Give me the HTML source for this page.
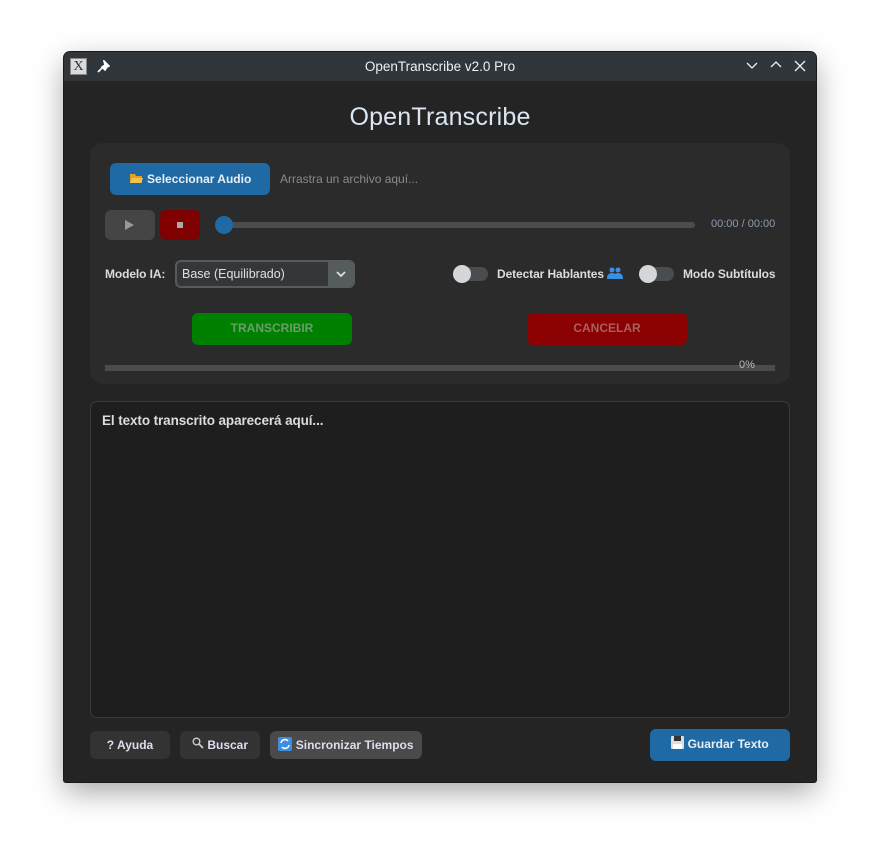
<!DOCTYPE html>
<html><head><meta charset="utf-8">
<style>
*{box-sizing:border-box;margin:0;padding:0}
body{width:880px;height:858px;background:#fff;position:relative;overflow:hidden;font-family:"Liberation Sans",sans-serif;}
.a{position:absolute}
#win{left:64px;top:52px;width:752px;height:730px;background:#242424;border-radius:6px 6px 2px 2px;box-shadow:0 0 0 1px #1a1a1a,0 10px 30px rgba(0,0,0,.35);overflow:hidden}
#tb{left:0;top:0;width:752px;height:29px;background:#31363b;color:#eef0f2;font-size:13.5px;text-align:center;line-height:29px}
.btn{position:absolute;border-radius:6px;text-align:center;color:#dde;font-weight:bold;font-size:12px}
.lbl{position:absolute;color:#dcdcdc;font-weight:bold;font-size:12px;letter-spacing:-0.1px}
.sw{position:absolute;width:34px;height:14px;border-radius:7px;background:#4a4d50}
.sw i{position:absolute;left:-1px;top:-2px;width:18px;height:18px;border-radius:50%;background:#d4d6da}
</style></head><body>
<div id="win" class="a">
 <div id="tb" class="a">OpenTranscribe v2.0 Pro
  <div class="a" style="left:6px;top:6px;width:17px;height:17px;background:#d9dadb;border:1px solid #888;color:#333;font-size:14px;line-height:16px;font-family:'Liberation Serif',serif">X</div>
  <svg class="a" style="left:32px;top:8px" width="14" height="14" viewBox="0 0 14 14"><path d="M8 1l5 5-2 1-2 3-3-3 3-2zM6 8l-4 4" stroke="#fff" stroke-width="1.6" fill="#fff"/></svg>
  <svg class="a" style="left:682px;top:9px" width="12" height="10"><path d="M1 2l5 5 5-5" stroke="#eee" fill="none" stroke-width="1.3"/></svg>
  <svg class="a" style="left:706px;top:8px" width="12" height="10"><path d="M1 7l5-5 5 5" stroke="#eee" fill="none" stroke-width="1.3"/></svg>
  <svg class="a" style="left:730px;top:8px" width="12" height="12"><path d="M1 1l10 10M11 1L1 11" stroke="#eee" fill="none" stroke-width="1.3"/></svg>
 </div>
 <div class="a" style="left:0;top:51px;width:752px;text-align:center;color:#dbe6f2;font-size:25px;letter-spacing:.2px">OpenTranscribe</div>
 <div class="a" style="left:26px;top:91px;width:700px;height:241px;background:#2b2b2b;border-radius:13px"></div>
 <div class="btn" style="left:46px;top:111px;width:160px;height:32px;background:#1f6aa5;line-height:32px;color:#e8eef4"><svg width="15" height="12" style="vertical-align:-1px"><path d="M1 2h5l1 2h6v7H1z" fill="#e0a020"/><path d="M3 6h11l-2 5H1z" fill="#f6c04a"/></svg> Seleccionar Audio</div>
 <div class="a" style="left:216px;top:120px;color:#8a8a8a;font-size:12px">Arrastra un archivo aquí...</div>
 <div class="btn" style="left:41px;top:158px;width:50px;height:30px;background:#454545"><svg class="a" style="left:19px;top:10px" width="10" height="10"><path d="M1 0l9 5-9 5z" fill="#999"/></svg></div>
 <div class="btn" style="left:96px;top:158px;width:40px;height:30px;background:#7f0000"><div class="a" style="left:17px;top:12px;width:6px;height:6px;background:#aaa"></div></div>
 <div class="a" style="left:155px;top:170px;width:476px;height:6px;background:#4a4d50;border-radius:3px"></div>
 <div class="a" style="left:151px;top:164px;width:18px;height:18px;border-radius:50%;background:#1f6aa5"></div>
 <div class="a" style="left:647px;top:166px;color:#8c9bb0;font-size:11px">00:00 / 00:00</div>
 <div class="lbl" style="left:41px;top:215px">Modelo IA:</div>
 <div class="a" style="left:111px;top:208px;width:180px;height:28px;border:2px solid #565b5e;border-radius:6px;background:#343638;overflow:hidden">
  <div class="a" style="left:5px;top:5px;color:#e0e0e0;font-size:12.5px">Base (Equilibrado)</div>
  <div class="a" style="left:151px;top:0;width:27px;height:24px;background:#565b5e"></div>
  <svg class="a" style="left:159px;top:9px" width="10" height="7"><path d="M1 1l4 4 4-4" stroke="#e0e0e0" stroke-width="1.8" fill="none"/></svg>
 </div>
 <div class="sw" style="left:390px;top:215px"><i></i></div>
 <div class="lbl" style="left:433px;top:215px">Detectar Hablantes <svg width="16" height="12" style="vertical-align:-1px"><circle cx="5" cy="3" r="2.5" fill="#3a8ee6"/><circle cx="11" cy="3" r="2.5" fill="#3a8ee6"/><path d="M0 12q0-6 5-6t5 6zM6 12q0-6 5-6t5 6z" fill="#3a8ee6"/></svg></div>
 <div class="sw" style="left:576px;top:215px"><i></i></div>
 <div class="lbl" style="left:619px;top:215px">Modo Subtítulos</div>
 <div class="btn" style="left:128px;top:261px;width:160px;height:32px;background:#008000;line-height:30px;color:#6a9d6a">TRANSCRIBIR</div>
 <div class="btn" style="left:463px;top:261px;width:160px;height:32px;background:#8b0000;line-height:30px;color:#a86060">CANCELAR</div>
 <div class="a" style="left:41px;top:313px;width:670px;height:6px;background:#4a4d50"></div>
 <div class="a" style="left:675px;top:307px;color:#bbb;font-size:11px">0%</div>
 <div class="a" style="left:26px;top:349px;width:700px;height:317px;background:#1e1e1e;border:1px solid #3a3a3a;border-radius:7px"></div>
 <div class="a" style="left:38px;top:361px;color:#dcdcdc;font-size:13.5px;font-weight:bold;letter-spacing:-0.1px">El texto transcrito aparecerá aquí...</div>
 <div class="btn" style="left:26px;top:679px;width:80px;height:28px;background:#333;line-height:28px">? Ayuda</div>
 <div class="btn" style="left:116px;top:679px;width:80px;height:28px;background:#333;line-height:28px"><svg width="12" height="12" style="vertical-align:0"><circle cx="4.5" cy="4.5" r="3.3" stroke="#ccc" stroke-width="1.4" fill="none"/><path d="M7 7l4 4" stroke="#ccc" stroke-width="1.8"/></svg> Buscar</div>
 <div class="btn" style="left:206px;top:679px;width:152px;height:28px;background:#4a4a4a;line-height:28px"><svg width="14" height="14" style="vertical-align:-2px"><rect width="14" height="14" rx="2" fill="#3d8ee0"/><path d="M3 6a4 4 0 0 1 7-2M11 8a4 4 0 0 1-7 2" stroke="#fff" stroke-width="1.5" fill="none"/></svg> Sincronizar Tiempos</div>
 <div class="btn" style="left:586px;top:677px;width:140px;height:32px;background:#1f6aa5;line-height:30px;color:#e8eef4"><svg width="13" height="13" style="vertical-align:-1px"><rect width="13" height="13" rx="1" fill="#ddd"/><rect x="3" y="0" width="7" height="5" fill="#333"/><rect x="2" y="8" width="9" height="5" fill="#fff"/></svg> Guardar Texto</div>
</div>
</body></html>
